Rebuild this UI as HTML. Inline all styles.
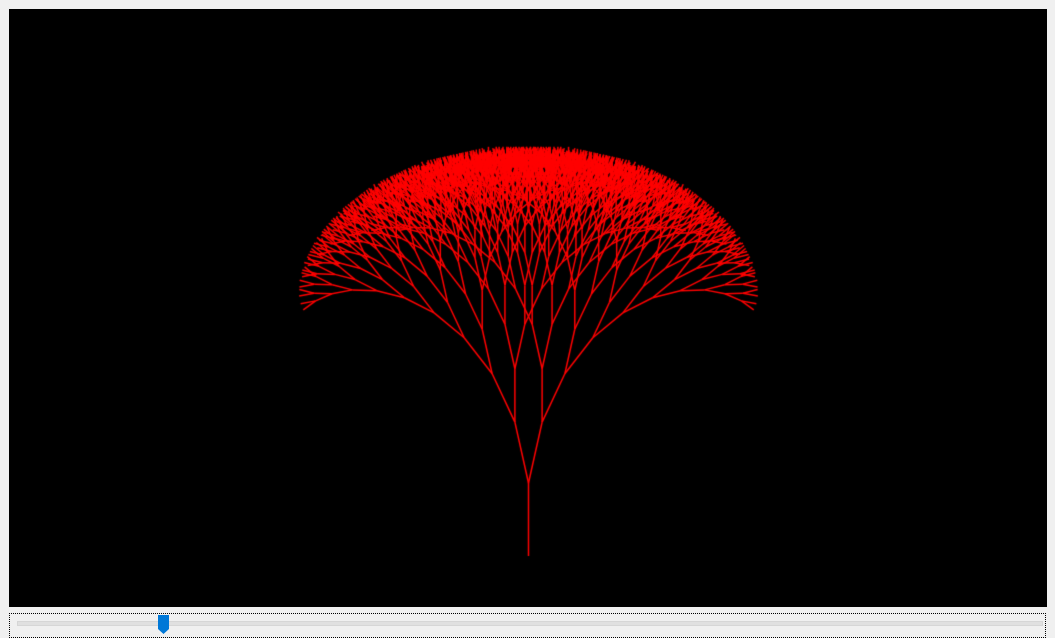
<!DOCTYPE html>
<html><head><meta charset="utf-8"><style>
html,body{margin:0;padding:0;background:#f0f0f0;width:1055px;height:634px;overflow:hidden}
#c{position:absolute;left:9px;top:9px;width:1038px;height:598px;background:#000}
#focus{position:absolute;left:9px;top:613px;width:1037px;height:25px;border:1px dotted #000;box-sizing:border-box}
#track{position:absolute;left:17px;top:621px;width:1024px;height:3px;background:#e0e0e0;border:1px solid #d6d6d6}
#thumb{position:absolute;left:158px;top:615px;width:11px;height:19px}
</style></head><body>
<canvas id="c" width="1038" height="598"></canvas>
<div id="focus"></div>
<div id="track"></div>
<svg id="thumb" width="11" height="19" viewBox="0 0 11 19"><path d="M0 0H11V14L5.5 19L0 14Z" fill="#0078d7"/></svg>
<script>
var cv=document.getElementById('c'),g=cv.getContext('2d');
g.fillStyle='#000';g.fillRect(0,0,1038,598);
g.strokeStyle='#ff0000';g.lineWidth=1.5;
var A=12.6*Math.PI/180,R=0.855;
function br(x,y,ang,len,d){
 var nx=x+Math.sin(ang)*len, ny=y-Math.cos(ang)*len;
 g.beginPath();g.moveTo(x,y);g.lineTo(nx,ny);g.stroke();
 if(d>0){br(nx,ny,ang-A,len*R,d-1);br(nx,ny,ang+A,len*R,d-1);}
}
br(519.5,547,0,73,10);
</script>
</body></html>
